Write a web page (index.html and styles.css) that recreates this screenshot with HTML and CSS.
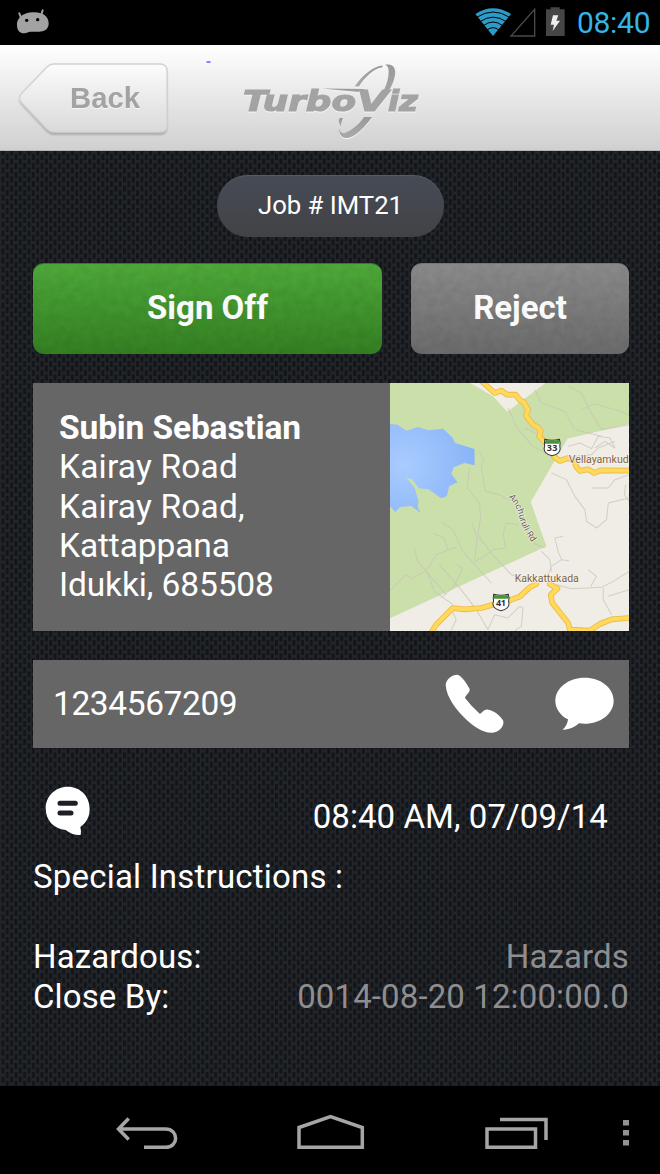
FILE: index.html
```html
<!DOCTYPE html>
<html lang="en">
<head>
<meta charset="utf-8">
<title>TurboViz</title>
<link rel="stylesheet" href="styles.css">
</head>
<body>
<div class="phone">
  <div class="status">
    <svg class="droid" width="34" height="26" viewBox="48 28 102 78"><path d="M58 41L63 54M128 32L123 47" stroke="#a2a2a2" stroke-width="6" stroke-linecap="round"/><path d="M51 78C49 58 66 38 99 38C133 37 147 54 146 73C145 91 129 97 114 96L90 96C73 103 53 105 51 78Z" fill="#a2a2a2"/><circle cx="80" cy="62" r="5"/><circle cx="113" cy="60" r="5"/></svg>
    <svg class="signals" width="92" height="36" viewBox="72 15 276 108">
      <path d="M76 42Q129 7 183 42L129 108Z" fill="#2d9ac8"/>
      <path d="M80 52Q129 20 179 52M90 65Q129 38 169 65M100 77Q129 55 158 77M111 90Q129 76 147 90" fill="none" stroke="#000" stroke-width="3"/>
      <path d="M254 28V108H183Z" fill="none" stroke="#4a4a4a" stroke-width="4"/>
      <path d="M288 28H302V22H329V28H344V108H288Z" fill="#464646"/>
      <path d="M309 46H325L319 62H330L308 93L312 74H302Z" fill="#eee"/>
    </svg>
    <span class="clock">08:40</span>
  </div>
  <header class="header">
    <svg width="660" height="106" viewBox="0 45 660 106">
      <defs>
        <linearGradient id="btn" x2="0" y2="1"><stop stop-color="#fcfcfc"/><stop offset="1" stop-color="#dadada"/></linearGradient>
        <linearGradient id="ring" x2="0" y2="1"><stop stop-color="#999"/><stop offset="1" stop-color="#aaa"/></linearGradient>
        <filter id="soft" x="-10%" y="-10%" width="120%" height="130%"><feGaussianBlur stdDeviation="1.1"/></filter>
      </defs>
      <path d="M53 65H160Q167 65 167 72V127Q167 134 160 134H54Q50 134 47 131L21 103Q18 98 21 95L47 67Q50 65 53 65Z" transform="translate(0 1)" fill="#aaa" filter="url(#soft)"/>
      <path d="M53 64H160Q167 64 167 71V125Q167 132 160 132H54Q50 132 47 129L21 102Q18 98 21 94L47 67Q50 64 53 64Z" fill="url(#btn)" stroke="#d2d2d2" stroke-width="1.3"/>
      <text class="back-label emboss" x="70" y="108" textLength="70" lengthAdjust="spacingAndGlyphs">Back</text>
      <path d="M206.500 62H210.500" stroke="#6666ff" stroke-width="1.600"/>
      <g class="emboss" fill="url(#ring)">
        <path d="M354.700 86.500C362 76 373 66 383 65.500L382 67.500C374 68 364 78 359 86.500Z"/>
        <path d="M385 64.800C391 63.500 395.500 66 395.200 73C394.500 82 389 92 382.500 101L377.500 101C383 93 388 83 388.500 74C389 68 388 66 385 64.800Z"/>
        <path d="M339.500 118L343 118C341 123 341 126 341 127C339 124 338 121 339.500 118Z"/>
        <path d="M339 128C340 133 343 134.500 347 132C354 129 361 122 364 117L372 117C365 127 357 135 350 137.500C343 139.500 339 136 339 128Z"/>
        <path d="M322 88.500L364 89L365 93L358 92Z"/>
      </g>
      <g class="logo emboss"><text x="243" y="111" textLength="113" lengthAdjust="spacingAndGlyphs">Turbo</text><text x="357" y="111" textLength="31" lengthAdjust="spacingAndGlyphs">V</text><text x="388" y="111" textLength="30" lengthAdjust="spacingAndGlyphs">iz</text></g>
    </svg>
  </header>
  <main class="content">
    <div class="job"><span>Job # IMT21</span></div>
    <div class="actions">
      <div class="button accept"><svg class="grain" width="100%" height="100%"><filter id="noise"><feTurbulence type="fractalNoise" baseFrequency=".12" numOctaves="3"/><feColorMatrix values="0 0 0 0 0  0 0 0 0 0  0 0 0 0 0  .5 0 0 0 -.15"/></filter><rect width="100%" height="100%" filter="url(#noise)"/></svg><span>Sign Off</span></div>
      <div class="button reject"><svg class="grain" width="100%" height="100%"><rect width="100%" height="100%" filter="url(#noise)"/></svg><span>Reject</span></div>
    </div>
    <section class="customer">
      <div class="address">
        <b class="t-name">Subin Sebastian</b>
        <span class="t-road">Kairay Road</span>
        <span class="t-road">Kairay Road,</span>
        <span class="t-town">Kattappana</span>
        <span class="t-town">Idukki, 685508</span>
      </div>
      <svg class="map" width="239" height="248" viewBox="17 15 715 744" preserveAspectRatio="none">
        <defs><radialGradient id="lake" gradientUnits="userSpaceOnUse" cx="60" cy="260" r="210"><stop stop-color="#a9ccff"/><stop offset="1" stop-color="#8ab4f8"/></radialGradient></defs>
        <rect x="17" y="15" width="715" height="744" fill="#f0ede6"/>
        <path d="M17 15H257L325 55L368 101L482 15H732V138L548 182L438 372L485 505L17 721Z" fill="#cadfaa"/>
        <path d="M17 138L40 140L66 158L100 147L132 157L176 152L205 180L212 195L270 213V262L240 255L207 268L201 288L219 313L194 325L187 354L170 361L132 334L103 331L83 304L66 299L91 329L102 370L100 387L109 404L80 384L47 387L33 402L17 385Z" fill="url(#lake)"/>
        <g fill="none" stroke="#c9c4b8" stroke-width="3" stroke-linejoin="round" opacity=".75">
          <path d="M285 220L298 245L290 270L303 340L350 352L375 368M255 268L248 330L285 375L288 420L280 470L322 528L380 590L410 600"/>
          <path d="M170 432L205 455L235 520L320 615M145 465L178 480L190 515L218 508M190 515L155 530L125 578L80 602L65 590L17 637M125 578L150 640L205 680M90 512L100 550L185 650M165 560L230 635L275 695L310 755M215 560L235 570L208 625L170 660M262 435L278 480L270 550L300 535L325 515L362 510L356 465L365 435L400 440"/>
          <path d="M370 90L400 155L445 205L510 240M420 150L455 165M450 35L470 75L540 100L570 155L650 175M550 25L590 45L610 90L650 155L732 140M590 95L630 77L690 95L732 110M550 205L585 195L620 212L640 175L675 180L690 210L660 190L630 210M500 285L545 305L570 355L600 395L605 430L635 450L665 425L670 375L732 360M620 330L670 330L690 305L732 290M570 235L620 230L640 210L690 190"/>
          <path d="M535 475L510 480L520 520L530 545L500 565L490 590M470 520L495 545L500 580M530 545L553 548M445 495L480 510M515 620L560 632L650 628L685 610L732 580M610 575L635 595L618 625M655 630L655 665L680 710M732 635L670 655M200 690L215 725L200 758M310 755L330 710L370 720L405 685L415 690L410 745L390 758M722 320L718 350L732 370"/>
        </g>
        <g fill="none" stroke-linejoin="round" stroke-linecap="round">
          <path id="roads" stroke="inherit" d="M292 10L330 45L350 38L367 50L393 50L407 68L417 72L430 95L424 113L445 140L458 147L468 160L463 175L478 190L495 210M508 236L525 249L550 240L568 248L575 268L586 279L610 274L628 285L647 277L732 278M140 765L155 740L205 690L240 694L290 690L325 680L380 665L405 656L435 628L455 618M495 618L518 632L498 650L502 674L550 735L555 755L615 758L645 738L680 724L732 720"/>
          <use href="#roads" stroke="#e9b94c" stroke-width="17"/>
          <use href="#roads" stroke="#ffd957" stroke-width="12"/>
        </g>
        <g id="shield"><path d="M480 184Q502 190 524 184L526 196Q524 203 526 212Q526 228 502 233Q478 228 478 212Q481 203 479 196Z" fill="#fff" stroke="#333" stroke-width="3"/><path d="M482 185Q502 190 522 185L524 197H480Z" fill="#4b9436"/></g>
        <use href="#shield" x="-153" y="465"/>
        <text class="shield-no" x="486" y="220" textLength="32">33</text><text class="shield-no" x="334" y="685" textLength="30">41</text>
        <text class="place" x="552" y="254" textLength="179" lengthAdjust="spacingAndGlyphs">Vellayamkud</text>
        <text class="place" x="390" y="611" textLength="192" lengthAdjust="spacingAndGlyphs">Kakkattukada</text>
        <path id="roadline" d="M371 357Q401 390 405 422Q418 464 445 496" fill="none"/>
        <text class="road"><textPath href="#roadline" textLength="155">Anchuruli Rd</textPath></text>
      </svg>
    </section>
    <section class="phone-row">
      <span class="t-phone">1234567209</span>
      <svg width="60" height="60" viewBox="46 58 180 180"><path d="M48 91C49 72 69 59 84 60C96 64 112 86 120 103C121 116 108 120 106 130Q124 154 151 178C158 174 163 163 176 165C193 168 213 183 221 199C224 216 207 234 185 234C157 234 132 215 108 193C84 169 50 130 48 91Z" fill="#fff"/></svg>
      <svg class="bubble" width="60" height="54" viewBox="374 67 180 162"><path d="M463 69C511 69 550 99 550 138S511 207 463 207L446 206C434 217 416 226 397 225C406 217 412 207 413 194C391 183 375 163 375 138C375 99 415 69 463 69Z" fill="#fff"/></svg>
    </section>
    <div class="note-row">
      <svg width="46" height="50" viewBox="75 48 138 150"><path d="M143 50C181 50 209 78 209 117C209 140 199 158 181 171Q184 180 182 195C165 196 149 190 137 180C101 177 77 151 77 115C77 79 106 50 143 50Z" fill="#fff"/><path d="M120 100H166M120 129H153" stroke="#1d1f25" stroke-width="15" stroke-linecap="round"/></svg>
      <span class="t-date">08:40 AM, 07/09/14</span>
    </div>
    <div class="special"><span>Special Instructions :</span></div>
    <dl class="facts">
      <div class="fact"><dt>Hazardous:</dt><dd>Hazards</dd></div>
      <div class="fact"><dt>Close By:</dt><dd>0014-08-20 12:00:00.0</dd></div>
    </dl>
  </main>
  <nav class="nav">
    <svg width="570" height="88" viewBox="90 1086 570 88" fill="none" stroke="#a5a5a5" stroke-width="3.500">
      <path d="M120 1129H165.500C179 1129 179 1147.300 165.500 1147.300H144M128.700 1118.500L118.500 1129L128.700 1139.500"/>
      <path d="M299 1127.500L330.500 1116.500L362.300 1127.500V1147.300H299Z"/>
      <path d="M487 1129H535.500V1147.300H487ZM500 1119.500H546V1140"/>
      <g fill="#929292" stroke="none"><rect x="623" y="1120" width="6" height="5.500"/><rect x="623" y="1130" width="6" height="5.500"/><rect x="623" y="1140" width="6" height="5.500"/></g>
    </svg>
  </nav>
</div>
</body>
</html>
```
FILE: styles.css
```css
* { box-sizing: border-box; }
body { margin: 0; background: #000; }
.phone { width: 660px; height: 1174px; display: flex; flex-direction: column; overflow: hidden; font-family: Roboto, "Liberation Sans", sans-serif; color: #fff; }
.phone svg { display: block; flex: none; }
.status { height: 45px; display: flex; align-items: center; padding: 0 9px 0 16px; }
.droid { margin-top: -2px; }
.signals { margin-left: auto; margin-right: 11px; }
.clock { width: 74px; font-size: 30px; letter-spacing: -.3px; line-height: 45px; color: #33b5e5; white-space: nowrap; }
.header { height: 106px; background: linear-gradient(#fff, #d0d0d0); border-bottom: 1px solid #b5b5b5; }
.back-label { font: bold 29px "Liberation Sans", sans-serif; fill: #a3a3a3; }
.emboss { filter: drop-shadow(0 1.500px 0 #f5f5f5); }
.logo { font: italic bold 29px "DejaVu Sans", sans-serif; fill: #a3a3a3; stroke: #a3a3a3; stroke-width: 1.200px; }
.content {
  height: 935px; padding: 24px 31px 0 33px; display: flex; flex-direction: column; background-color: #212429;
  background-image: conic-gradient(from 90deg at 5.700px 3px, #131519 90deg, transparent 0), conic-gradient(from 90deg at 5.700px 3px, #131519 90deg, transparent 0);
  background-size: 8.700px 9px;
  background-position: 0 0, 4.350px 4.500px;
}
.job { align-self: center; width: 227px; height: 62px; margin-left: -1px; border-radius: 31px; background: linear-gradient(#464b55, #424246); border-top: 1px solid #555b65; font-size: 25.700px; line-height: 59px; text-align: center; }
.actions { display: flex; justify-content: space-between; margin-top: 26px; height: 91px; }
.button { border-radius: 11px; overflow: hidden; display: grid; font-size: 33px; font-weight: 700; line-height: 88px; text-align: center; }
.button > * { grid-area: 1 / 1; }
.accept { width: 349px; background: linear-gradient(#4fa93a, #338022); border-top: 1px solid #387a2a; }
.reject { width: 218px; background: linear-gradient(#8b8b8b, #6b6b6b); border-top: 1px solid #777; }
.grain { opacity: .22; }
.customer { display: flex; margin-top: 29px; height: 248px; background: #666; }
.address { flex: 1; display: flex; flex-direction: column; align-items: flex-start; padding: 25px 0 0 26px; font-size: 33.500px; line-height: 39.250px; white-space: nowrap; }
.t-name { letter-spacing: -.13px; }
.t-road { letter-spacing: .18px; }
.t-town { letter-spacing: -.12px; }
.shield-no { font: bold 27px "Open Sans", sans-serif; fill: #333; }
.place { font: 30px Roboto, sans-serif; fill: #806548; stroke: #f6f3e9; stroke-width: 4px; paint-order: stroke; }
.road { font: 27px Roboto, sans-serif; fill: #625b50; stroke: #f0efe5; stroke-width: 4px; paint-order: stroke; }
.phone-row { display: flex; align-items: center; margin-top: 29px; height: 88px; padding: 0 14px 0 20px; background: #666; font-size: 33.500px; }
.t-phone { flex: 1; padding-bottom: 2px; letter-spacing: -.4px; }
.bubble { margin-left: 50px; }
.note-row { display: flex; justify-content: space-between; align-items: center; margin: 38px 21px 0 12px; height: 50px; font-size: 33px; }
.t-date { padding-top: 10px; letter-spacing: .08px; }
.special { margin-top: 21px; font-size: 33px; line-height: 39px; letter-spacing: .2px; }
.facts { margin: 41px 0 0; font-size: 33px; line-height: 39.500px; letter-spacing: .12px; }
.fact { display: flex; justify-content: space-between; }
.fact dd { margin: 0; color: #8e8e90; }
.nav { height: 88px; display: flex; justify-content: flex-end; background: #000; }
```
